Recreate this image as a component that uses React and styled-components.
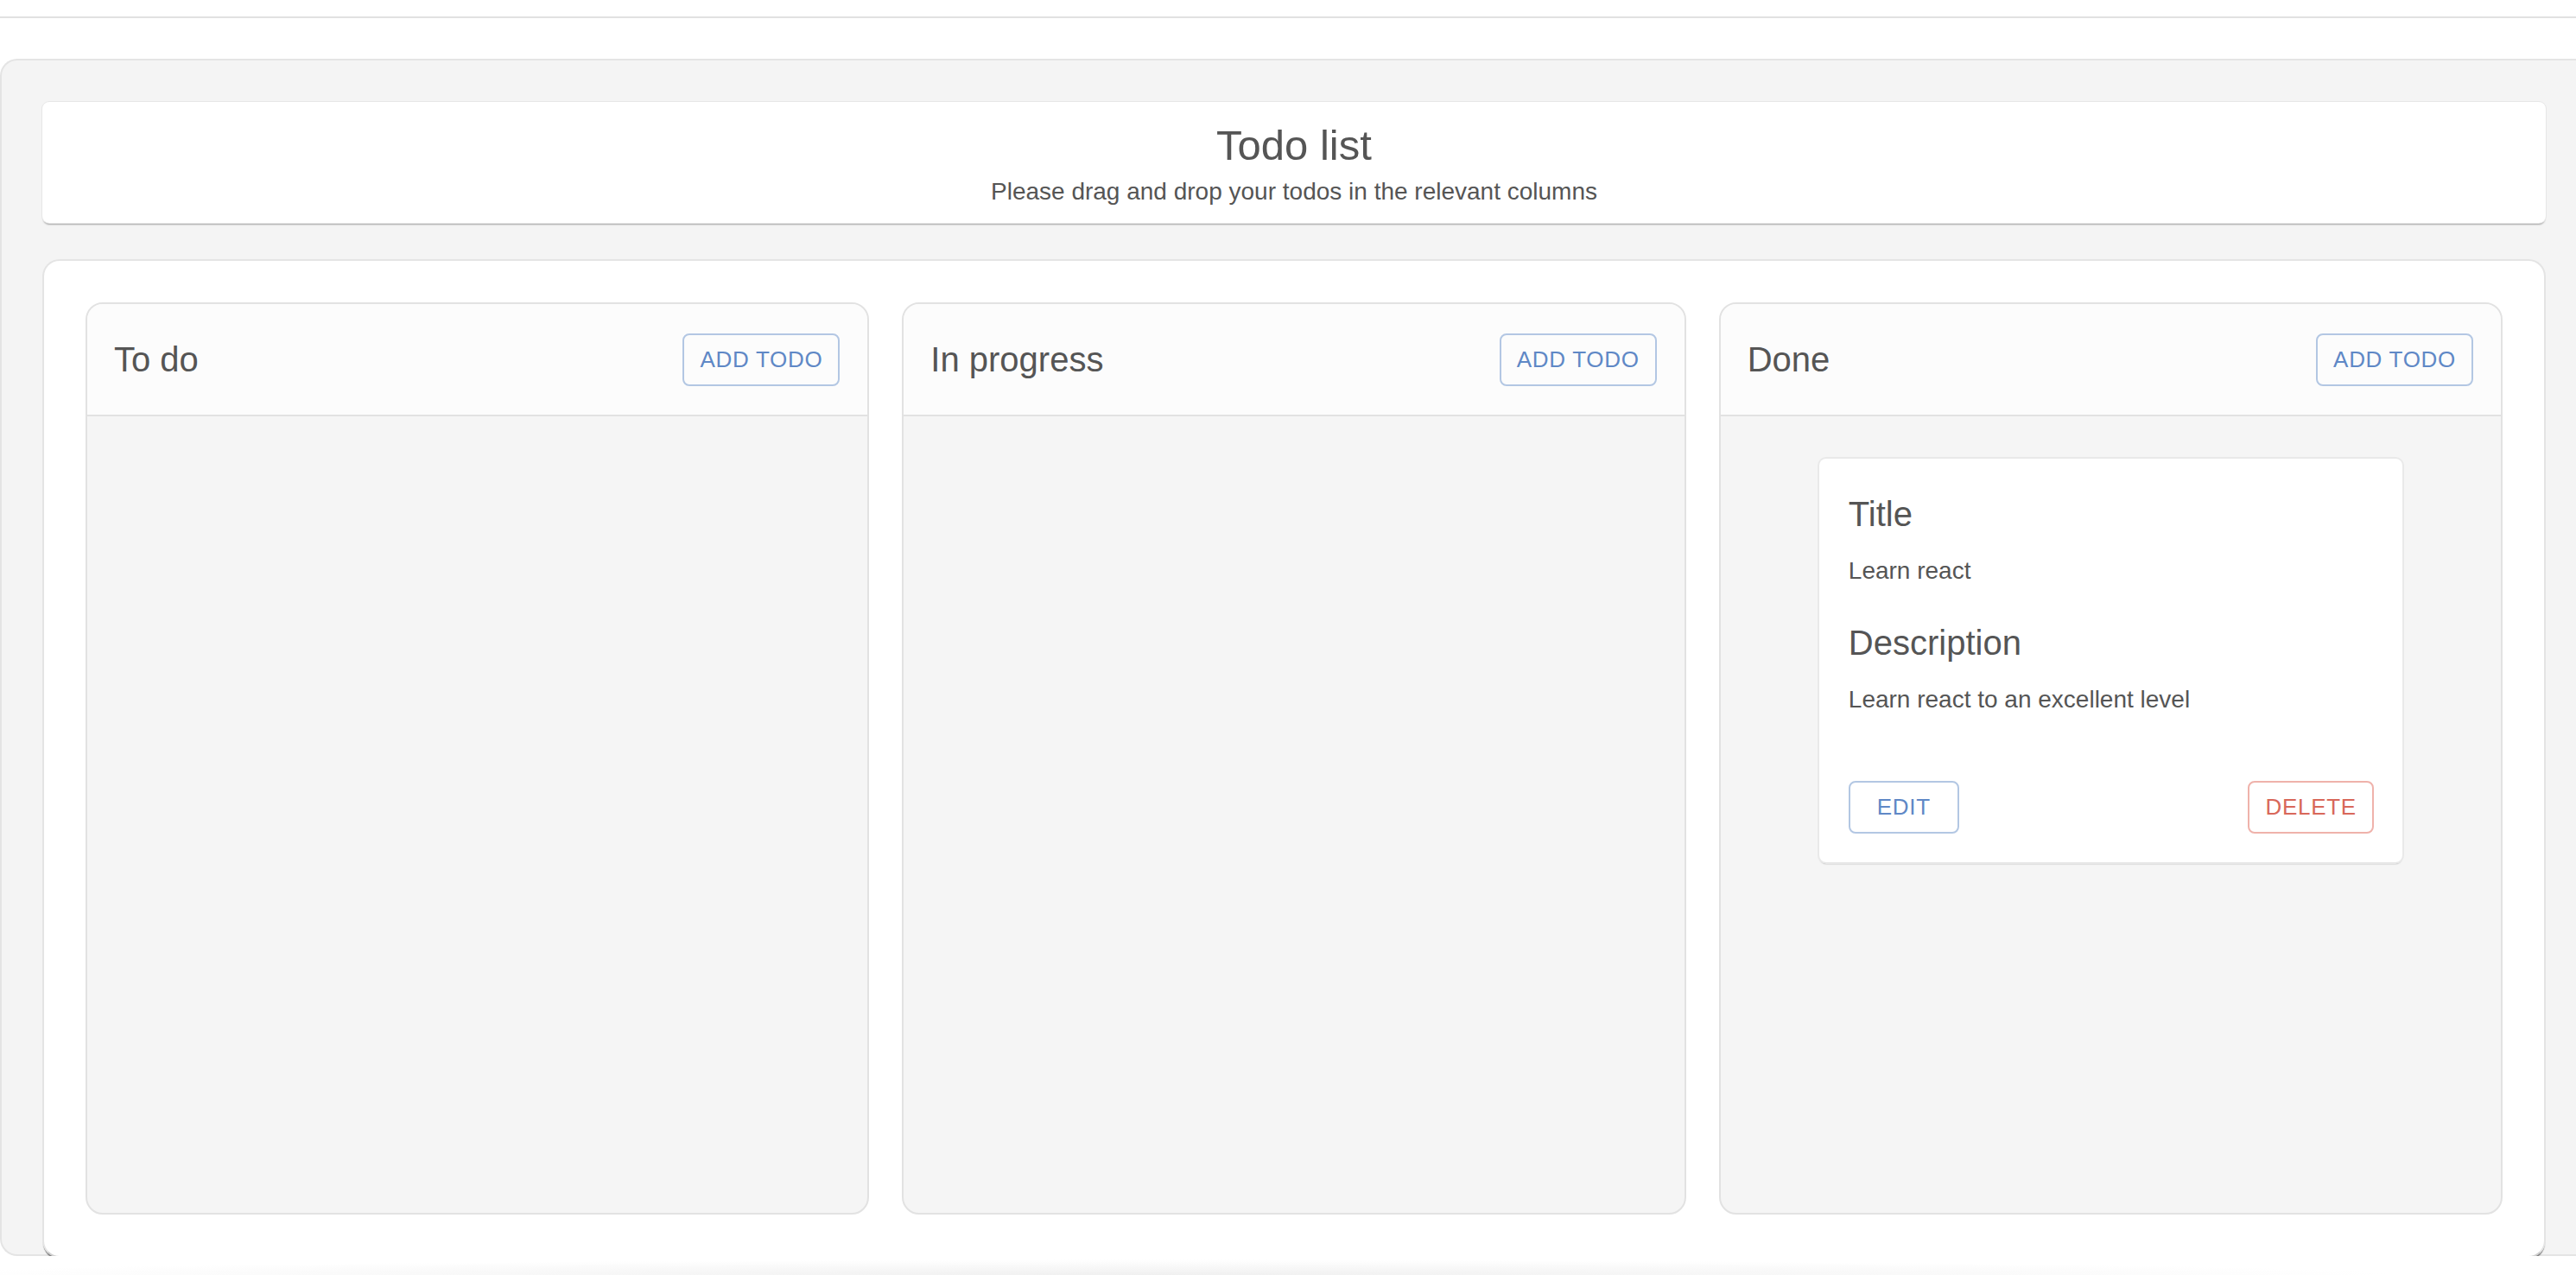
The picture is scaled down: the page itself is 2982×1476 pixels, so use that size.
import React from 'react'
import styled, { createGlobalStyle } from 'styled-components'

const columns = [
    { id: 'todo', title: 'To do', todos: [] },
    { id: 'progress', title: 'In progress', todos: [] },
    {
        id: 'done',
        title: 'Done',
        todos: [
            { id: 1, title: 'Learn react', description: 'Learn react to an excellent level' }
        ]
    }
]

const TodoCard = ({ todo }) => (
    <Card>
        <Heading>Title</Heading>
        <Text>{todo.title}</Text>
        <Heading className="gap">Description</Heading>
        <Text>{todo.description}</Text>
        <Actions>
            <OutlineButton>Edit</OutlineButton>
            <OutlineButton danger>Delete</OutlineButton>
        </Actions>
    </Card>
)

const Column = ({ column }) => (
    <ColumnBox>
        <ColumnHeader>
            <ColumnTitle>{column.title}</ColumnTitle>
            <OutlineButton>Add todo</OutlineButton>
        </ColumnHeader>
        <ColumnBody>
            {column.todos.map(todo => <TodoCard key={todo.id} todo={todo} />)}
        </ColumnBody>
    </ColumnBox>
)

const App = () => (
    <Page>
        <GlobalStyle />
        <TopBar />
        <Shell>
            <Header>
                <h1>Todo list</h1>
                <p>Please drag and drop your todos in the relevant columns</p>
            </Header>
            <Board>
                {columns.map(column => <Column key={column.id} column={column} />)}
            </Board>
        </Shell>
        <BottomGlow />
    </Page>
)

export default App


const GlobalStyle = createGlobalStyle`
    html, body {
        margin: 0;
        padding: 0;
        background: #fff;
    }
    body {
        font-family: 'Liberation Sans', Arial, Helvetica, sans-serif;
        color: #555;
        overflow: hidden;
    }
    * {
        box-sizing: border-box;
    }
`

const Page = styled.div`
    display: flex;
    flex-direction: column;
    height: 100vh;
    overflow: hidden;
`

const TopBar = styled.div`
    height: 21px;
    flex-shrink: 0;
    border-bottom: 2px solid #e1e1e1;
    background: #fff;
`

const Shell = styled.div`
    margin-top: 47px;
    flex-shrink: 0;
    background: #f4f4f4;
    border: 2px solid #e4e4e4;
    border-right: 0;
    border-radius: 20px 0 0 20px;
    padding: 48px 35px 0 47px;
    display: flex;
    flex-direction: column;
    gap: 42px;
`

const Header = styled.div`
    background: #fff;
    border-radius: 8px;
    box-shadow: 0 0 0 1px #e6e6e6, 0 3px 2px -1px rgba(0, 0, 0, 0.35);
    padding: 22px 0 19px;
    text-align: center;

    h1 {
        margin: 0;
        font-size: 49px;
        font-weight: 400;
        line-height: 57px;
        color: #555;
    }

    p {
        margin: 8px 0 0;
        font-size: 28px;
        line-height: 34px;
        color: #555;
    }
`

const Board = styled.div`
    background: #fff;
    border: 2px solid #e4e4e4;
    border-bottom-color: #d0d0d0;
    border-radius: 20px;
    box-shadow: 0 3px 1px -1px rgba(0, 0, 0, 0.5);
    padding: 48px;
    margin-bottom: -4px;
    display: grid;
    grid-template-columns: repeat(3, 1fr);
    gap: 38px;
`

const ColumnBox = styled.div`
    height: 1056px;
    display: flex;
    flex-direction: column;
    background: #f5f5f5;
    border: 2px solid #e2e2e2;
    border-radius: 20px;
    overflow: hidden;
`

const ColumnHeader = styled.div`
    height: 130px;
    flex-shrink: 0;
    display: flex;
    align-items: center;
    justify-content: space-between;
    padding: 0 32px 0 31px;
    background: #fcfcfc;
    border-bottom: 2px solid #e2e2e2;
`

const ColumnTitle = styled.h2`
    margin: 0;
    font-size: 40px;
    font-weight: 400;
    line-height: 1.6;
    color: #555;
`

const ColumnBody = styled.div`
    flex: 1;
    display: flex;
    flex-direction: column;
    align-items: center;
    padding-top: 49px;
`

const Card = styled.div`
    width: 675px;
    background: #fff;
    border-radius: 8px;
    box-shadow: 0 0 0 2px #e9e9e9, 0 3px 2px -1px rgba(0, 0, 0, 0.35);
    padding: 32px 33px 33px 34px;

    .gap {
        margin-top: 31px;
    }
`

const Heading = styled.h3`
    margin: 0;
    font-size: 40px;
    font-weight: 400;
    line-height: 64px;
    color: #555;
`

const Text = styled.p`
    margin: 14px 0 0;
    font-size: 28px;
    line-height: 40px;
    color: #555;
`

const Actions = styled.div`
    display: flex;
    justify-content: space-between;
    margin-top: 74px;
`

const OutlineButton = styled.button`
    min-width: 128px;
    padding: 6px 18px;
    border: 2px solid ${props => props.danger ? '#efb2ab' : '#b3c7e3'};
    border-radius: 8px;
    background: transparent;
    color: ${props => props.danger ? '#d8685a' : '#5f88c6'};
    font-family: 'Liberation Sans', Arial, Helvetica, sans-serif;
    font-size: 26px;
    font-weight: 400;
    line-height: 45px;
    letter-spacing: 0.7px;
    text-transform: uppercase;
    cursor: pointer;
`

const BottomGlow = styled.div`
    flex: 1;
    background: radial-gradient(ellipse 60% 100% at 45% 100%, #f0f0f0, #fff 80%);
`
